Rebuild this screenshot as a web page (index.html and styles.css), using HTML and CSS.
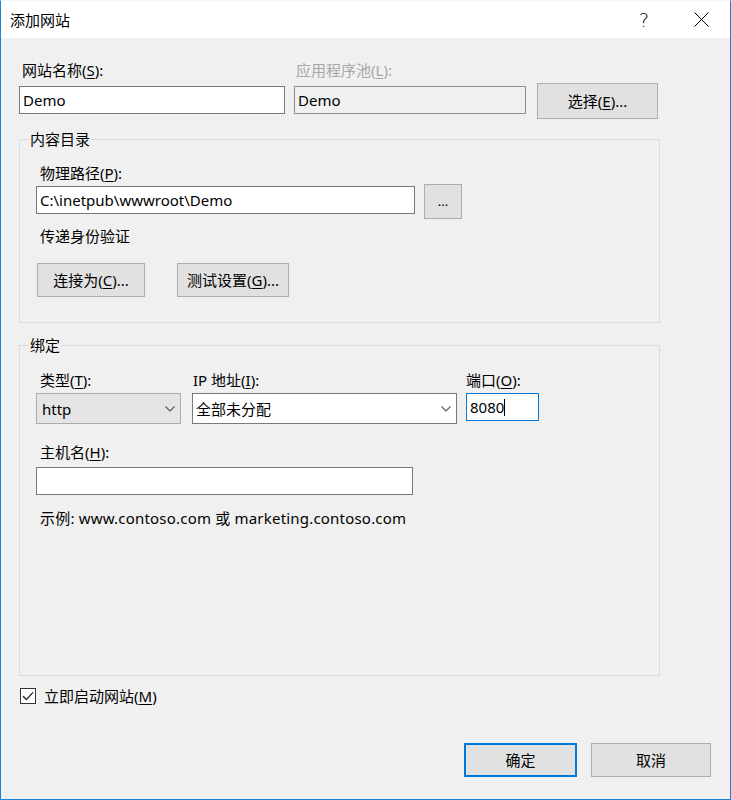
FILE: index.html
```html
<!DOCTYPE html>
<html lang="zh-CN">
<head>
<meta charset="utf-8">
<title>添加网站</title>
<link rel="stylesheet" href="styles.css">
</head>
<body>
<div class="window">
  <div class="titlebar">
    <span class="title">添加网站</span>
    <span class="tb-btn tb-help">?</span>
    <span class="tb-btn tb-close">
      <svg width="15" height="15" viewBox="0 0 15 15"><path d="M0.5 0.5 L14.5 14.5 M14.5 0.5 L0.5 14.5" stroke="#000" stroke-width="1" fill="none"/></svg>
    </span>
  </div>
  <div class="content">
    <div class="site-row">
      <div class="field f-name">
        <div class="lbl lbl-top">网站名称(<u>S</u>):</div>
        <div class="textbox">Demo</div>
      </div>
      <div class="field f-pool">
        <div class="lbl lbl-top lbl-disabled">应用程序池(<u>L</u>):</div>
        <div class="textbox textbox-readonly">Demo</div>
      </div>
      <div class="btn btn-select">选择(<u>E</u>)...</div>
    </div>

    <fieldset class="group g-content">
      <legend>内容目录</legend>
      <div class="lbl lbl-ind l-path">物理路径(<u>P</u>):</div>
      <div class="path-row">
        <div class="textbox tb-path">C:\inetpub\wwwroot\Demo</div>
        <div class="btn btn-browse">...</div>
      </div>
      <div class="lbl lbl-ind l-auth">传递身份验证</div>
      <div class="auth-row">
        <div class="btn btn-connect">连接为(<u>C</u>)...</div>
        <div class="btn btn-test">测试设置(<u>G</u>)...</div>
      </div>
    </fieldset>

    <fieldset class="group g-binding">
      <legend>绑定</legend>
      <div class="bind-row">
        <div class="col col-type">
          <div class="lbl lbl-ind">类型(<u>T</u>):</div>
          <div class="combo combo-list">
            <span>http</span>
            <svg class="chev" width="10" height="6" viewBox="0 0 10 6"><path d="M0.5 0.5 L5 5 L9.5 0.5" stroke="#5a5a5a" stroke-width="1.1" fill="none"/></svg>
          </div>
        </div>
        <div class="col col-ip">
          <div class="lbl l-ip">IP 地址(<u>I</u>):</div>
          <div class="combo combo-edit">
            <span>全部未分配</span>
            <svg class="chev" width="10" height="6" viewBox="0 0 10 6"><path d="M0.5 0.5 L5 5 L9.5 0.5" stroke="#5a5a5a" stroke-width="1.1" fill="none"/></svg>
          </div>
        </div>
        <div class="col col-port">
          <div class="lbl">端口(<u>O</u>):</div>
          <div class="textbox tb-port">8080<span class="caret"></span></div>
        </div>
      </div>
      <div class="lbl lbl-ind l-host">主机名(<u>H</u>):</div>
      <div class="textbox tb-host"></div>
      <div class="lbl lbl-ind l-example">示例: www.contoso.com 或 marketing.contoso.com</div>
    </fieldset>

    <div class="check-row">
      <span class="checkbox">
        <svg width="16" height="16" viewBox="0 0 16 16"><rect x="0.5" y="0.5" width="15" height="15" fill="#fff" stroke="#333" stroke-width="1"/><path d="M3 8.2 L6.4 11.6 L13 4.4" stroke="#222" stroke-width="1.4" fill="none"/></svg>
      </span>
      <span class="check-label">立即启动网站(<u>M</u>)</span>
    </div>

    <div class="footer">
      <div class="btn btn-ok">确定</div>
      <div class="btn btn-cancel">取消</div>
    </div>
  </div>
</div>
</body>
</html>
```

FILE: styles.css
```css
html, body {
  margin: 0;
  padding: 0;
  background: #ffffff;
}

.window {
  width: 731px;
  height: 800px;
  box-sizing: border-box;
  border: 1px solid #1883d7;
  border-top-color: #f4f7fb;
  background: #f0f0f0;
  font-family: "Noto Sans", "Noto Sans CJK SC", sans-serif;
  font-size: 15px;
  line-height: 20px;
  color: #000;
  display: flex;
  flex-direction: column;
  overflow: hidden;
}

u {
  text-decoration: underline;
  text-underline-offset: 2px;
  text-decoration-thickness: 1px;
}

/* Title bar */
.titlebar {
  height: 37px;
  background: #ffffff;
  display: flex;
  align-items: center;
  padding-left: 9px;
}
.title {
  flex: 1;
  line-height: 20px;
}
.tb-btn {
  height: 37px;
  display: flex;
  align-items: center;
  justify-content: center;
}
.tb-help {
  width: 46px;
  margin-right: 5px;
  font-family: "DejaVu Sans", sans-serif;
  font-weight: 200;
  font-size: 19px;
  color: #000;
  padding-top: 1px;
  box-sizing: border-box;
}
.tb-close {
  width: 58px;
}

/* Content */
.content {
  flex: 1;
  padding-left: 18px;
  display: flex;
  flex-direction: column;
}

.lbl {
  height: 20px;
  line-height: 20px;
  white-space: nowrap;
}
.lbl-top {
  padding-left: 3px;
  margin-bottom: 6px;
}
.lbl-disabled {
  color: #a6a6a6;
  padding-left: 2px;
}
.lbl-ind {
  padding-left: 4px;
}
.l-example {
  letter-spacing: 0.2px;
}

.textbox {
  box-sizing: border-box;
  height: 28px;
  border: 1px solid #7a7a7a;
  background: #ffffff;
  padding: 0 3px;
  line-height: 26px;
  white-space: nowrap;
  overflow: hidden;
}
.textbox-readonly {
  background: #f0f0f0;
  border-color: #8e8e8e;
}

.btn {
  box-sizing: border-box;
  border: 1px solid #adadad;
  background: #e1e1e1;
  display: flex;
  align-items: center;
  justify-content: center;
  white-space: nowrap;
}

/* Top row */
.site-row {
  display: flex;
  align-items: flex-start;
  margin-top: 22px;
}
.f-name {
  width: 266px;
}
.f-pool {
  width: 232px;
  margin-left: 9px;
}
.btn-select {
  width: 121px;
  height: 36px;
  margin-left: 11px;
  margin-top: 23px;
}

/* Group boxes */
.group {
  box-sizing: border-box;
  width: 641px;
  margin: 0;
  border: 1px solid #dcdcdc;
  padding: 0 0 0 16px;
  min-width: 0;
}
.group legend {
  padding: 0 1px;
  margin-left: -7px;
  line-height: 20px;
  height: 20px;
}

.g-content {
  margin-top: 10px;
  padding-bottom: 25px;
}
.l-path {
  margin-top: 14px;
}
.path-row {
  display: flex;
  align-items: flex-start;
  margin-top: 1px;
}
.tb-path {
  width: 379px;
  margin-top: 2px;
}
.btn-browse {
  width: 38px;
  height: 35px;
  margin-left: 9px;
  font-size: 13px;
  line-height: 14px;
  padding-bottom: 2px;
}
.l-auth {
  margin-top: 7px;
}
.auth-row {
  display: flex;
  margin-top: 17px;
}
.btn-connect {
  width: 108px;
  height: 34px;
  margin-left: 1px;
}
.btn-test {
  width: 112px;
  height: 34px;
  margin-left: 32px;
}

.g-binding {
  margin-top: 12px;
  padding-bottom: 147px;
}
.bind-row {
  display: flex;
  align-items: flex-start;
  margin-top: 15px;
}
.col {
  display: flex;
  flex-direction: column;
}
.col .lbl {
  margin-bottom: 3px;
}
.col-type {
  width: 145px;
}
.col-ip {
  width: 265px;
  margin-left: 11px;
}
.l-ip {
  padding-left: 1px;
}
.col-port {
  width: 73px;
  margin-left: 9px;
}

.combo {
  box-sizing: border-box;
  height: 31px;
  display: flex;
  align-items: center;
  justify-content: space-between;
  white-space: nowrap;
}
.combo-list {
  border: 1px solid #acacac;
  background: #e5e5e5;
  padding: 0 5px 0 5px;
}
.combo-edit {
  border: 1px solid #7a7a7a;
  background: #ffffff;
  padding: 0 5px 0 3px;
}
.chev {
  display: block;
  margin-top: 1px;
}

.tb-port {
  border-color: #0078d7;
  display: flex;
  align-items: center;
}
.caret {
  display: inline-block;
  width: 1px;
  height: 17px;
  background: #000;
}

.l-host {
  margin-top: 18px;
}
.tb-host {
  width: 377px;
  margin-top: 5px;
}
.l-example {
  margin-top: 13px;
}

/* Checkbox */
.check-row {
  display: flex;
  align-items: center;
  height: 20px;
  margin-top: 10px;
  padding-left: 1px;
}
.checkbox {
  width: 16px;
  height: 16px;
  display: block;
}
.checkbox svg {
  display: block;
}
.check-label {
  margin-left: 8px;
}

/* Footer */
.footer {
  display: flex;
  justify-content: flex-end;
  margin-top: 37px;
  margin-right: 19px;
}
.btn-ok {
  width: 113px;
  height: 34px;
  border: 2px solid #0078d7;
}
.btn-cancel {
  width: 120px;
  height: 34px;
  margin-left: 14px;
}
```
